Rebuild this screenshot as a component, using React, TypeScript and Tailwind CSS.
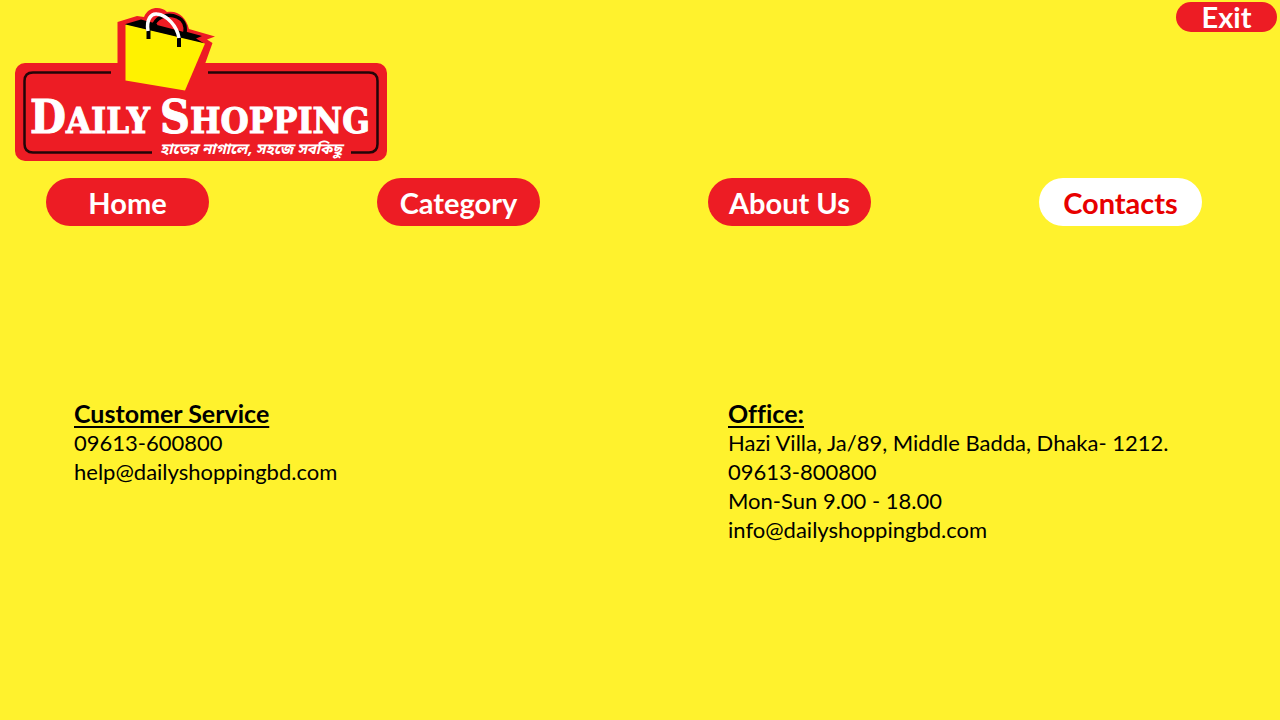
const navItems = [
  { label: "Home", active: false },
  { label: "Category", active: false },
  { label: "About Us", active: false },
  { label: "Contacts", active: true },
];

function Logo() {
  return (
    <svg
      className="block shrink-0"
      width="400"
      height="170"
      viewBox="0 0 400 170"
      role="img"
      aria-label="Daily Shopping"
    >
      <rect x="15" y="63" width="372" height="98" rx="10" fill="#ed1c24" />
      <path
        d="M117.500 64V22L137 16L144 17C147 10 152 8 157 8C161 8 164 9 167 12C178 10 186 17 189 29L215 36.500L207 39.500L212.500 43L205 64V80H117.500Z"
        fill="#ed1c24"
      />
      <path
        d="M111 72.500H33Q24.500 72.500 24.500 81V144Q24.500 152.500 33 152.500H152M208 72.500H369Q377.500 72.500 377.500 81V144Q377.500 152.500 369 152.500H351"
        fill="none"
        stroke="#230508"
        strokeWidth="2.500"
      />
      <path d="M125.500 24L141 19.500L202 36L196 38.500L205 44L125.500 25Z" fill="#000" />
      <path d="M125.500 24.500L205 43.500L185 90.500L125.500 80.500Z" fill="#fff200" />
      <path d="M157 25C158 19 167 17 172 18L184 32Z" fill="#ed1c24" />
      <path
        d="M154 24C158 16 169 13 177 17C184 20 186 26 185 33"
        fill="none"
        stroke="#000"
        strokeWidth="3.500"
      />
      <path d="M148.500 29V39M179 37V47" stroke="#000" strokeWidth="4" />
      <path
        d="M148 31C146 20 151 13 157 14C167 15 177 26 179 38"
        fill="none"
        stroke="#fff"
        strokeWidth="3.500"
      />
      <g
        fill="#fff"
        stroke="#fff"
        strokeWidth="1"
        fontFamily="'DejaVu Serif Condensed', 'DejaVu Serif', serif"
        fontWeight="700"
        fontSize="36"
      >
        <text x="30" y="133">
          <tspan fontSize="46">D</tspan>AILY
        </text>
        <text x="160" y="133">
          <tspan fontSize="46">S</tspan>HOPPING
        </text>
      </g>
      <text
        x="160"
        y="154"
        fill="#fff"
        fontFamily="'Noto Sans Bengali', 'Noto Sans', sans-serif"
        fontSize="15"
        fontWeight="700"
        fontStyle="italic"
      >
        হাতের নাগালে, সহজে সবকিছু
      </text>
    </svg>
  );
}

export default function App() {
  return (
    <div className="min-h-screen bg-[#fff22d] font-['Lato',sans-serif] text-black [font-variant-ligatures:none]">
      <header className="flex items-start justify-between">
        <a href="#home">
          <Logo />
        </a>
        <button
          type="button"
          className="mt-0.5 mr-[3px] h-[30px] w-[101px] rounded-full bg-[#ed1c24] text-[29px] leading-[30px] font-bold text-white"
        >
          Exit
        </button>
      </header>

      <nav className="flex justify-between pt-2 pr-[78px] pl-[46px]">
        {navItems.map((item) => (
          <a
            key={item.label}
            href={"#" + item.label}
            aria-current={item.active ? "page" : undefined}
            className={
              "h-12 w-[163px] rounded-full text-center text-[29px] leading-[50px] font-bold whitespace-nowrap " +
              (item.active ? "bg-white text-[#e80000]" : "bg-[#ed1c24] text-white")
            }
          >
            {item.label}
          </a>
        ))}
      </nav>

      <main className="grid grid-cols-[654fr_552fr] pt-[173px] pl-[74px] text-[22px] leading-[29px]">
        <section>
          <h2 className="text-[25px] leading-[29px] font-bold underline decoration-2 underline-offset-3">
            Customer Service
          </h2>
          <p>09613-600800</p>
          <p>help@dailyshoppingbd.com</p>
        </section>
        <section>
          <h2 className="text-[25px] leading-[29px] font-bold underline decoration-2 underline-offset-3">
            Office:
          </h2>
          <p>Hazi Villa, Ja/89, Middle Badda, Dhaka- 1212.</p>
          <p>09613-800800</p>
          <p>Mon-Sun 9.00 - 18.00</p>
          <p>info@dailyshoppingbd.com</p>
        </section>
      </main>
    </div>
  );
}
